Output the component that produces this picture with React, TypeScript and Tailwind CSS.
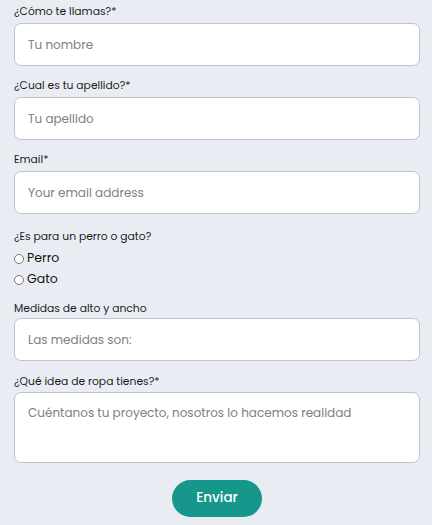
import React from 'react'

const font = "font-['Poppins','Inter','Noto_Sans',sans-serif]"

function Field({ label, placeholder, type = 'text' }: { label: string; placeholder: string; type?: string }) {
  return (
    <div className="mb-[12px]">
      <label className="block text-[10.75px] leading-[16px] text-[#1c1c1c] mb-[3px]">{label}</label>
      <input
        type={type}
        placeholder={placeholder}
        className="block h-[43px] w-full rounded-[7px] border border-[#bcc3cf] bg-white px-[13px] text-[12px] text-[#333] placeholder:text-[#808080] outline-none"
      />
    </div>
  )
}

export default function App() {
  return (
    <div className={`min-h-[525px] bg-[#e9edf3] px-[14px] pt-[4px] pr-[12px] ${font}`}>
      <Field label="¿Cómo te llamas?*" placeholder="Tu nombre" />
      <Field label="¿Cual es tu apellido?*" placeholder="Tu apellido" />
      <Field label="Email*" placeholder="Your email address" type="email" />

      {/* radios */}
      <div className="pt-[3px] mb-[11px]">
        <p className="text-[10.75px] leading-[16px] text-[#1c1c1c] mb-[3px]">¿Es para un perro o gato?</p>
        <label className="flex h-[21px] items-center gap-[3px] text-[12.5px] text-[#111]">
          <input type="radio" name="animal" className="m-0 h-[10px] w-[10px]" />
          Perro
        </label>
        <label className="flex h-[21px] items-center gap-[3px] text-[12.5px] text-[#111]">
          <input type="radio" name="animal" className="m-0 h-[10px] w-[10px]" />
          Gato
        </label>
      </div>

      <div className="mb-[13px]">
        <label className="block text-[10.75px] leading-[16px] text-[#1c1c1c] mb-[1px]">Medidas de alto y ancho</label>
        <input
          placeholder="Las medidas son:"
          className="block h-[43px] w-full rounded-[7px] border border-[#bcc3cf] bg-white px-[13px] text-[12px] text-[#333] placeholder:text-[#808080] outline-none"
        />
      </div>

      <div>
        <label className="block text-[10.75px] leading-[16px] text-[#1c1c1c] mb-[2px]">¿Qué idea de ropa tienes?*</label>
        <textarea
          placeholder="Cuéntanos tu proyecto, nosotros lo hacemos realidad"
          className="block h-[71px] w-full resize-none rounded-[7px] border border-[#bcc3cf] bg-white px-[13px] py-[11px] text-[12px] leading-[18px] text-[#333] placeholder:text-[#808080] outline-none"
        />
      </div>

      <div className="flex justify-center pt-[17px] pb-[8px]">
        <button className="h-[37px] w-[90px] rounded-full bg-[#17968b] text-[13.5px] font-medium text-white">
          Enviar
        </button>
      </div>
    </div>
  )
}
